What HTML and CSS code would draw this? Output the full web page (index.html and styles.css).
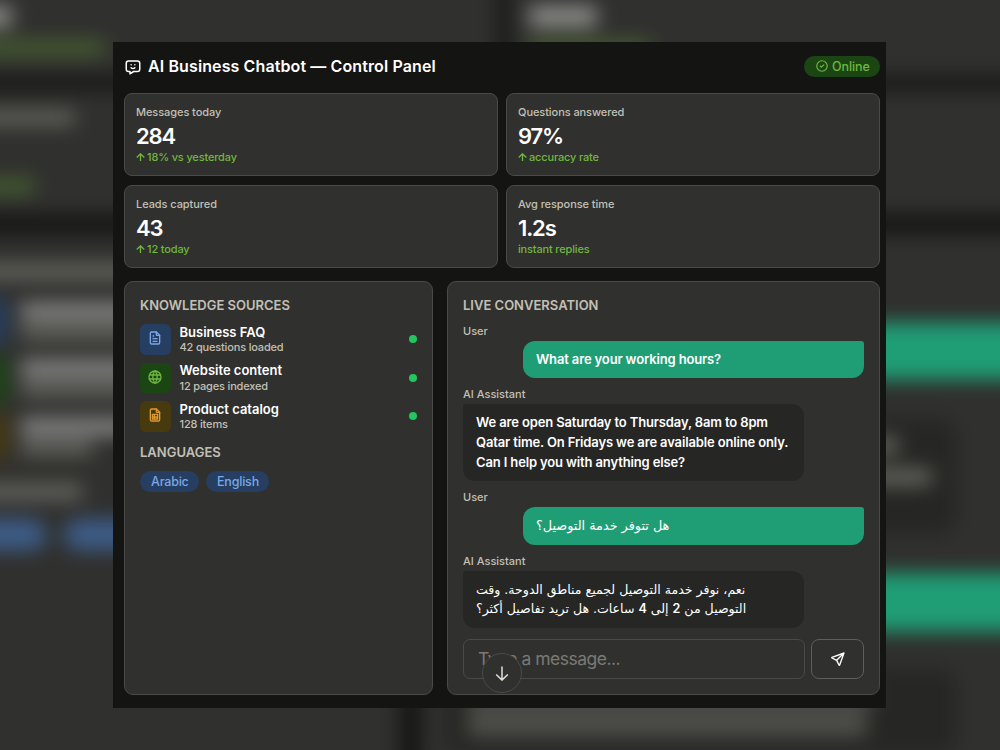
FILE: index.html
```html
<!DOCTYPE html>
<html lang="en">
<head>
  <meta charset="UTF-8">
  <title>AI Business Chatbot — Control Panel</title>
  <link rel="stylesheet" href="styles.css">
</head>
<body>
  <!-- soft enlarged silhouette of the panel -->
  <svg class="backdrop" viewBox="166.2 125 666.6 500" preserveAspectRatio="none" aria-hidden="true">
    <defs>
      <filter id="soft" filterUnits="userSpaceOnUse" x="100" y="60" width="800" height="640" color-interpolation-filters="sRGB"><feGaussianBlur stdDeviation="6.5"/></filter>
    </defs>
    <g filter="url(#soft)">
      <rect x="60" y="40" width="880" height="680" fill="#141412"/>
      <g fill="#30302e">
        <rect x="60" y="93" width="438" height="83"/><rect x="506" y="93" width="434" height="83"/>
        <rect x="60" y="185" width="438" height="83"/><rect x="506" y="185" width="434" height="83"/>
        <rect x="60" y="281" width="373" height="414"/><rect x="447" y="281" width="493" height="414"/>
      </g>
      <g fill="#8c8c89">
        <rect x="136" y="129" width="38" height="14"/><rect x="519" y="129" width="45" height="14"/>
      </g>
      <g fill="#456030">
        <rect x="136" y="152" width="100" height="10"/><rect x="519" y="152" width="81" height="10"/>
        <rect x="136" y="244" width="53" height="10"/>
      </g>
      <g fill="#686862">
        <rect x="136" y="199" width="80" height="9"/>
        <rect x="140" y="301" width="150" height="10"/>
        <rect x="180" y="342" width="104" height="9"/><rect x="180" y="380" width="87" height="9"/>
        <rect x="180" y="419" width="48" height="9"/><rect x="140" y="448" width="81" height="10"/>
      </g>
      <g fill="#8a8a8a">
        <rect x="180" y="327" width="85" height="11"/><rect x="180" y="365" width="104" height="11"/>
        <rect x="180" y="404" width="99" height="11"/>
      </g>
      <rect x="140" y="324" width="31" height="30" fill="#253e61"/>
      <rect x="140" y="363" width="31" height="30" fill="#1b4614"/>
      <rect x="140" y="401" width="31" height="30" fill="#483a0f"/>
      <g fill="#3c5c87">
        <rect x="140" y="471" width="57" height="21" rx="10"/><rect x="209" y="471" width="60" height="21" rx="10"/>
      </g>
      <g fill="#1f9e75">
        <rect x="523" y="340" width="417" height="38"/><rect x="523" y="507" width="417" height="39"/>
      </g>
      <g fill="#262624">
        <rect x="463" y="404" width="341" height="77" rx="12"/><rect x="463" y="571" width="341" height="57" rx="12"/>
      </g>
      <g fill="#6b6b66">
        <rect x="476" y="417" width="289" height="10"/><rect x="476" y="438" width="311" height="10"/>
      </g>
      <g fill="#50504c">
        <rect x="478" y="583" width="270" height="14"/><rect x="478" y="600" width="266" height="16"/>
      </g>
    </g>
  </svg>

  <main class="panel">
    <header class="topbar">
      <svg class="icon logo" viewBox="0 0 24 24"><path d="M18 4a3 3 0 0 1 3 3v8a3 3 0 0 1-3 3h-5l-5 3v-3H6a3 3 0 0 1-3-3V7a3 3 0 0 1 3-3z"/><path d="M9.5 9h.01M14.5 9h.01M9.5 13a3.5 3.5 0 0 0 5 0"/></svg>
      <h1>AI Business Chatbot — Control Panel</h1>
      <span class="status">
        <svg class="icon" viewBox="0 0 24 24"><circle cx="12" cy="12" r="9"/><path d="M9 12l2 2 4-4"/></svg>
        Online
      </span>
    </header>

    <section class="stats">
      <div class="card">
        <div class="label">Messages today</div>
        <div class="value">284</div>
        <div class="delta"><svg class="up" viewBox="0 0 9 8"><path d="M4.5 8V.9M.7 4.5L4.5.8l3.8 3.7"/></svg>18% vs yesterday</div>
      </div>
      <div class="card">
        <div class="label">Questions answered</div>
        <div class="value">97%</div>
        <div class="delta"><svg class="up" viewBox="0 0 9 8"><path d="M4.5 8V.9M.7 4.5L4.5.8l3.8 3.7"/></svg>accuracy rate</div>
      </div>
      <div class="card">
        <div class="label">Leads captured</div>
        <div class="value">43</div>
        <div class="delta"><svg class="up" viewBox="0 0 9 8"><path d="M4.5 8V.9M.7 4.5L4.5.8l3.8 3.7"/></svg>12 today</div>
      </div>
      <div class="card">
        <div class="label">Avg response time</div>
        <div class="value">1.2s</div>
        <div class="delta">instant replies</div>
      </div>
    </section>

    <div class="columns">
      <section class="box">
        <h2>KNOWLEDGE SOURCES</h2>
        <ul class="sources">
          <li>
            <span class="tile blue"><svg class="icon" viewBox="0 0 24 24"><path d="M14 3v4a1 1 0 0 0 1 1h4"/><path d="M17 21H7a2 2 0 0 1-2-2V5a2 2 0 0 1 2-2h7l5 5v11a2 2 0 0 1-2 2zM9 9h1M9 13h6M9 17h6"/></svg></span>
            <div class="info"><div class="name">Business FAQ</div><div class="sub">42 questions loaded</div></div>
            <i class="dot"></i>
          </li>
          <li>
            <span class="tile green"><svg class="icon" viewBox="0 0 24 24"><circle cx="12" cy="12" r="9"/><path d="M3.6 9h16.8M3.6 15h16.8M11.5 3a17 17 0 0 0 0 18M12.5 3a17 17 0 0 1 0 18"/></svg></span>
            <div class="info"><div class="name">Website content</div><div class="sub">12 pages indexed</div></div>
            <i class="dot"></i>
          </li>
          <li>
            <span class="tile amber"><svg class="icon" viewBox="0 0 24 24"><path d="M14 3v4a1 1 0 0 0 1 1h4"/><path d="M17 21H7a2 2 0 0 1-2-2V5a2 2 0 0 1 2-2h7l5 5v11a2 2 0 0 1-2 2z"/><path d="M8 11h8v7H8zM8 15h8M11 11v7"/></svg></span>
            <div class="info"><div class="name">Product catalog</div><div class="sub">128 items</div></div>
            <i class="dot"></i>
          </li>
        </ul>
        <h2>LANGUAGES</h2>
        <div class="langs"><span class="pill">Arabic</span><span class="pill">English</span></div>
      </section>

      <section class="box chat">
        <h2>LIVE CONVERSATION</h2>
        <div class="who">User</div>
        <div class="bubble user">What are your working hours?</div>
        <div class="who">AI Assistant</div>
        <div class="bubble bot">We are open Saturday to Thursday, 8am to 8pm<br>Qatar time. On Fridays we are available online only.<br>Can I help you with anything else?</div>
        <div class="who">User</div>
        <div class="bubble user arabic" lang="ar"><bdi dir="rtl">هل تتوفر خدمة التوصيل؟</bdi></div>
        <div class="who">AI Assistant</div>
        <div class="bubble bot arabic" lang="ar"><bdi dir="rtl">نعم، نوفر خدمة التوصيل لجميع مناطق الدوحة. وقت</bdi><br><bdi dir="rtl">التوصيل من <b>2</b> إلى <b>4</b> ساعات. هل تريد تفاصيل أكثر؟</bdi></div>
        <div class="compose">
          <div class="field">Type a message...</div>
          <button class="send" aria-label="Send"><svg class="icon" viewBox="0 0 24 24"><path d="M10 14L21 3M21 3l-6.5 18a.55.55 0 0 1-1 0L10 14l-7-3.500a.55.55 0 0 1 0-1z"/></svg></button>
        </div>
        <button class="scroll-down" aria-label="Scroll down"><svg viewBox="0 0 14 15"><path d="M7 .5v13.300M1.200 8.500L7 14.100l5.800-5.600"/></svg></button>
      </section>
    </div>
  </main>
</body>
</html>
```

FILE: styles.css
```css
* { box-sizing: border-box; }
html, body { margin: 0; height: 100%; overflow: hidden; }
body { display: flex; justify-content: center; align-items: flex-start; padding-top: 42px; background: #30302e; color: #fff; font-family: Inter, "DejaVu Sans", sans-serif; }
h1, h2, ul { margin: 0; padding: 0; font-weight: 600; }
.backdrop { position: absolute; inset: 0; width: 1000px; height: 750px; }
.icon { fill: none; stroke: currentColor; stroke-width: 2; stroke-linecap: round; stroke-linejoin: round; width: 16px; height: 16px; flex: none; display: block; }

.panel { position: relative; width: 773px; height: 666px; padding: 12px 6px 13px 11px; background: #141412; display: flex; flex-direction: column; margin-right: 1px; }
.topbar { display: flex; align-items: center; height: 24px; margin-bottom: 15px; }
.logo { width: 18px; height: 18px; margin: 1px 6.5px 0 -.5px; }
h1 { flex: 1; font-size: 16px; line-height: 24px; letter-spacing: .11px; white-space: nowrap; }
.status { display: flex; align-items: center; gap: 3px; width: 76px; height: 21px; padding-left: 11px; border-radius: 11px; background: #1b4614; color: #6fb73f; font-size: 12.5px; font-weight: 500; letter-spacing: -.1px; }
.status .icon { width: 14px; height: 14px; }

.stats { display: grid; grid-template-columns: 1fr 1fr; gap: 9px 8px; margin-bottom: 13px; }
.card { height: 83px; padding: 10px 11px; border: 1px solid #4a4a48; border-radius: 8px; background: #30302e; }
.label { color: #c2c0b6; font-size: 11px; line-height: 16px; font-weight: 500; letter-spacing: -.07px; }
.value { margin-top: 1px; font-size: 22px; line-height: 30px; font-weight: 600; letter-spacing: -1.1px; }
.delta { display: flex; align-items: center; gap: 2px; color: #6fb73f; font-size: 11px; line-height: 12px; font-weight: 500; letter-spacing: -.16px; }
.up { width: 9px; height: 8px; fill: none; stroke: currentColor; stroke-width: 1.3; }

.columns { flex: 1; display: grid; grid-template-columns: 309px 433px; gap: 14px; }
.box { position: relative; padding: 15px; border: 1px solid #4a4a48; border-radius: 9px; background: #30302e; }
h2 { font-size: 13px; line-height: 17px; letter-spacing: 0; color: #c2c0b6; }
.sources { list-style: none; display: flex; flex-direction: column; gap: 8px; margin: 10px 0 12.5px; }
.sources li { display: flex; align-items: center; height: 30.5px; }
.tile { display: flex; align-items: center; justify-content: center; width: 31px; height: 30.5px; margin-right: 8.5px; border-radius: 6px; padding: 0 1px 2px 0; }
.blue { background: #253e61; color: #7aa7e6; }
.green { background: #1b4614; color: #6fb73f; }
.amber { background: #483a0f; color: #dc9a35; }
.info { flex: 1; }
.name { font-size: 13px; line-height: 15.5px; font-weight: 600; letter-spacing: 0; }
.sub { font-size: 11px; line-height: 14px; font-weight: 500; letter-spacing: -.17px; color: #c2c0b6; }
.dot { width: 8px; height: 8px; border-radius: 50%; background: #22c55e; }
.langs { display: flex; gap: 7px; margin-top: 10px; }
.pill { width: 59px; height: 21px; padding-left: 11px; border-radius: 11px; background: #253e61; color: #7aa7e6; font-size: 12.5px; line-height: 21px; font-weight: 500; letter-spacing: -.2px; }
.pill + .pill { width: 63px; }

.chat h2 { margin-bottom: 7px; }
.who { font-size: 11px; line-height: 20px; font-weight: 500; letter-spacing: 0; color: #c2c0b6; }
.bubble { width: 341px; margin-bottom: 6px; padding: 8px 13px; font-size: 13px; line-height: 20.2px; font-weight: 600; letter-spacing: -.14px; white-space: nowrap; }
.user { height: 37px; margin-left: auto; border-radius: 12px 3px 12px 12px; background: #1f9e75; }
.bot { height: 77px; border-radius: 3px 12px 12px 12px; background: #262624; }
.arabic { font-family: "DejaVu Sans", sans-serif; font-weight: 400; font-size: 12.8px; line-height: 19px; letter-spacing: 0; padding-top: 9px; }
.arabic b { font-family: Inter, sans-serif; font-weight: 600; }
.user.arabic { height: 38px; }
.bot.arabic { height: 57px; margin-bottom: 11px; font-size: 12.55px; }
.compose { display: flex; gap: 6px; height: 40px; }
.field { flex: 1; padding-left: 14px; border: 1px solid #4a4a48; border-radius: 7px; font-size: 17.5px; line-height: 38px; letter-spacing: -.5px; color: #7b7a75; }
.send { width: 53px; padding: 0; display: flex; align-items: center; justify-content: center; background: none; color: #fff; border: 1px solid #5e5e5b; border-radius: 8px; }
.scroll-down { position: absolute; left: 34px; bottom: 1px; width: 40px; height: 40px; padding: 0; display: flex; align-items: center; justify-content: center; border: 1px solid #4a4a48; border-radius: 50%; background: #30302e; }
.scroll-down svg { width: 14px; height: 15px; fill: none; stroke: #e0dfd8; stroke-width: 1.5; }
```
